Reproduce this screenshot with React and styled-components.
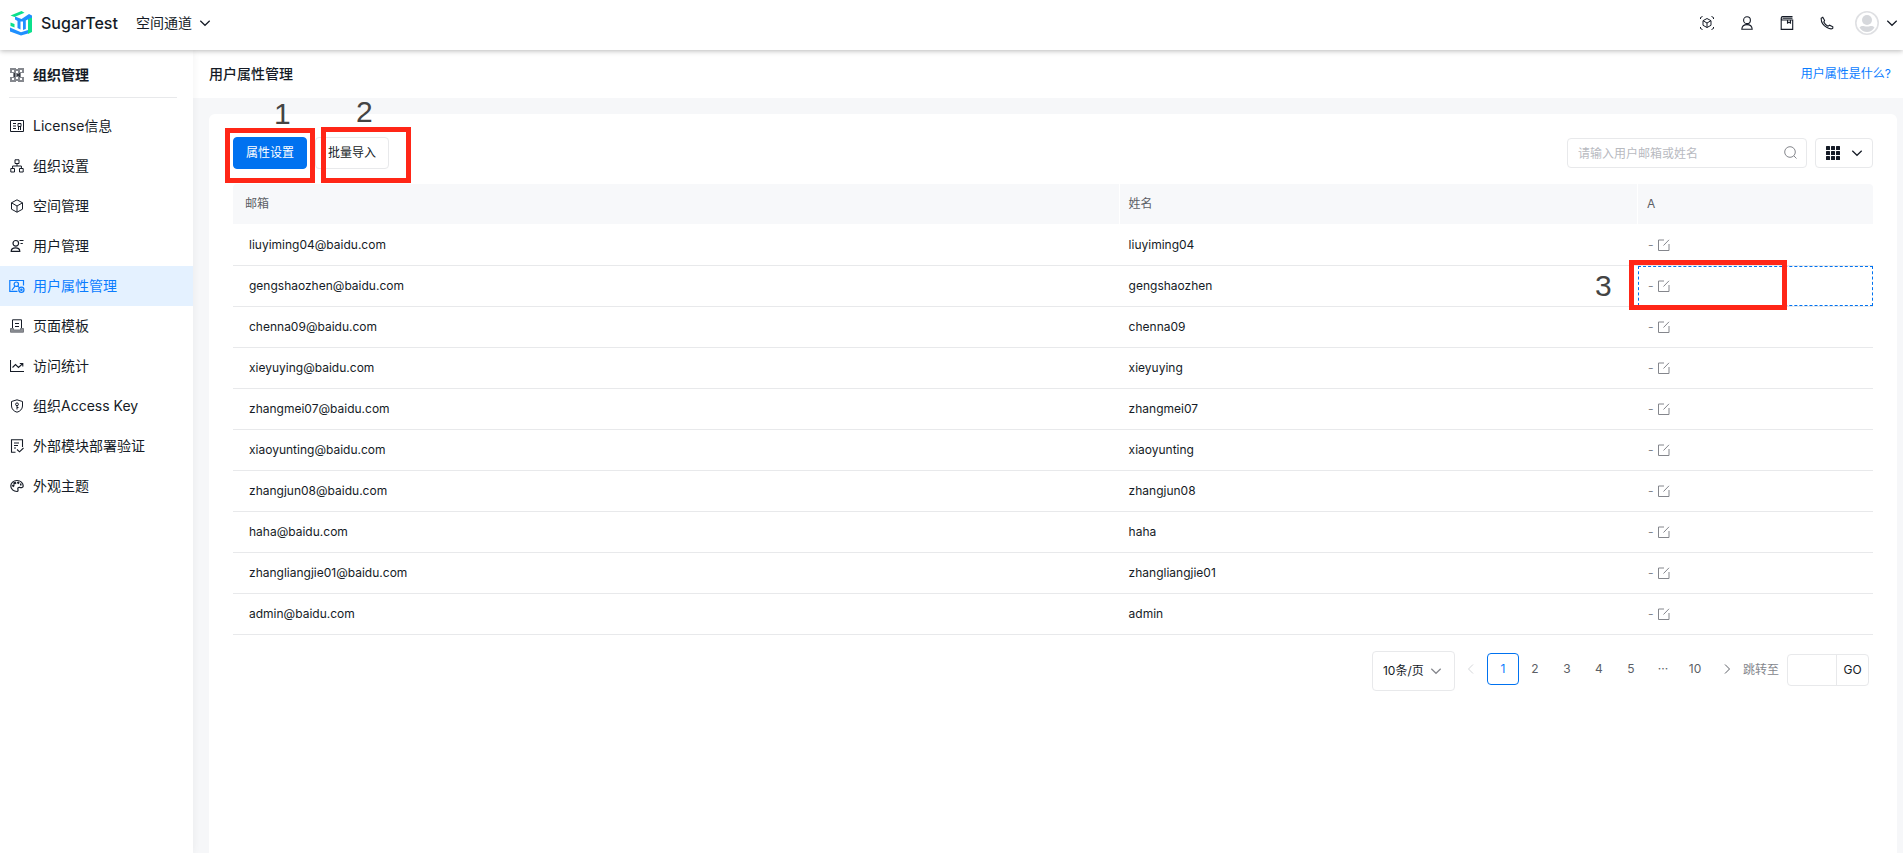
import React, { useState } from "react";
import styled, { createGlobalStyle } from "styled-components";

const GlobalStyle = createGlobalStyle`
  * {
    box-sizing: border-box;
  }

  body {
    margin: 0;
    background: #f6f7f9;
    color: #151b26;
    font-family: Inter, "Noto Sans CJK SC", sans-serif;
    font-size: 12px;
    line-height: 20px;
  }

  button,
  input,
  select {
    font: inherit;
    color: inherit;
  }

  svg {
    display: block;
    flex: none;
  }
`;

/* ---------- icons ---------- */

const Icon = ({ size = 14, box = 14, width = 1, children }) => (
  <svg
    width={size}
    height={size}
    viewBox={`0 0 ${box} ${box}`}
    fill="none"
    stroke="currentColor"
    strokeWidth={width}
    aria-hidden="true"
  >
    {children}
  </svg>
);

const Logo = () => (
  <svg width="24" height="26" viewBox="0 0 24 26" aria-hidden="true">
    <path d="M1.5 5.5 L12.5 1 L15.5 2.8 L5.5 7 Z" fill="#0be08c" />
    <path d="M19 9 L23 6.5 V22 L19 24 Z" fill="#0be08c" />
    <path d="M1.5 12.5 L5.5 14 V17.5 L1.5 16 Z" fill="#0be08c" />
    <path
      d="M6 6.5 L12.5 9 L20 4 L23 5.5 V7.5 L16.8 10.5 V19 L14 20 V11.5 L11.5 11.5 V19.5 L8.5 18 V11 L6 9.5 Z"
      fill="#2090ff"
    />
    <path d="M1 17.5 L12 22.3 L19 20 V23.5 L12 25.5 L1 21.5 Z" fill="#2090ff" />
  </svg>
);

const ChevronDown = () => (
  <Icon size={12} box={12} width={1.2}>
    <path d="M1.3 3.8 L6 8.3 L10.7 3.8" />
  </Icon>
);

const ChevronLeft = () => (
  <Icon size={12} box={12}>
    <path d="M8 1.5 L3.5 6 L8 10.5" />
  </Icon>
);

const ChevronRight = () => (
  <Icon size={12} box={12}>
    <path d="M4 1.5 L8.5 6 L4 10.5" />
  </Icon>
);

const OrgIcon = () => (
  <svg width="14" height="14" viewBox="0 0 14 14" aria-hidden="true">
    <path
      d="M0 0 H6 V1 H8 V0 H14 V5 H11 V9 H14 V14 H8 V13 H6 V14 H0 V9 H3 V5 H0 Z M2 2 V4 H4 V2 Z M10 2 V4 H12 V2 Z M2 10 V12 H4 V10 Z M10 10 V12 H12 V10 Z M6 3 V5 H8 V3 Z M6 9 V11 H8 V9 Z"
      fill="#85888e"
      fillRule="evenodd"
    />
    <path d="M4 5 H5 V9 H4 Z M9 5 H10 V9 H9 Z M7 6 H9 V8 H7 Z" fill="#33373f" />
  </svg>
);

const LicenseIcon = () => (
  <Icon>
    <path d="M0.5 1.5 H13.5 V12.5 H0.5 Z M3 4.5 H6 M3 7 H6 M3 9.5 H6" />
    <path d="M8 4.5 H11 V7.5 H8 Z M8.5 7.5 V11 M10.5 7.5 V11" />
  </Icon>
);

const TreeIcon = () => (
  <Icon>
    <path d="M5 0.8 H9 V4.5 H5 Z M0.8 9.5 H4.5 V13 H0.8 Z M9.5 9.5 H13.2 V13 H9.5 Z" />
    <path d="M7 4.5 V7 M2.6 9.5 V7 H11.4 V9.5" />
  </Icon>
);

const CubeIcon = () => (
  <Icon>
    <path d="M7 0.8 L12.5 3.8 V10.2 L7 13.2 L1.5 10.2 V3.8 Z M1.5 3.8 L7 7 L12.5 3.8 M7 7 V13.2" />
  </Icon>
);

const UserListIcon = () => (
  <Icon width={1.2}>
    <circle cx="5.8" cy="4.3" r="2.8" />
    <path d="M1.2 12.4 C1.2 9.6 3 8.8 5.5 8.8 S9.8 9.6 9.8 12.4 Z M9.5 1.5 H13.5 M10.5 4.5 H12.8" />
  </Icon>
);

const UserAttrIcon = () => (
  <Icon size={16} box={16} width={1.2}>
    <path d="M8.5 13.4 H0.8 V2.5 H14.5 V7.5 M3 12 L6 8.2 M9 8.2 L10 9.5" />
    <circle cx="7.3" cy="6.2" r="2.2" />
    <circle cx="12.4" cy="11.8" r="2.6" />
    <circle cx="12.4" cy="11.8" r="0.7" />
  </Icon>
);

const TemplateIcon = () => (
  <Icon>
    <path d="M2.5 9.5 V0.8 H11.5 V9.5 M5 4.5 H9 M5 7.5 H9" />
    <path d="M0.5 9.5 H3.5 V11 H10.5 V9.5 H13.5 V13.2 H0.5 Z" fill="#8c8f94" stroke="#777a80" />
  </Icon>
);

const StatIcon = () => (
  <Icon width={1.1}>
    <path d="M0.5 1 V12.5 H14 M2.5 8.5 L5.5 5.5 L8.5 8.5 L12.8 4.5 M9.8 4.5 H12.8 V7.5" />
  </Icon>
);

const ShieldIcon = () => (
  <Icon>
    <path d="M7 0.8 L12.5 2.5 V7 C12.5 10 10 12.5 7 13.2 C4 12.5 1.5 10 1.5 7 V2.5 Z" />
    <circle cx="7" cy="5.3" r="1.4" />
    <path d="M7 6.7 V10.5 M7 8.5 H8.5" />
  </Icon>
);

const VerifyIcon = () => (
  <Icon width={1.1}>
    <path d="M5.5 13.2 H1.5 V0.8 H12.5 V8 M4 4 H9 M4 6.5 H8 M4 9 H6 M7 10.5 L9.5 12.8 L13.5 9" />
  </Icon>
);

const PaletteIcon = () => (
  <Icon width={1.2}>
    <path d="M7 1.5 C3.5 1.5 0.8 4 0.8 7 S3.5 12.5 7 12.5 C8.5 12.5 8 10.5 7.8 9.8 C7.6 8.8 8.5 8.2 9.5 8.4 C11.5 9 13.2 8.5 13.2 7 C13.2 4 10.5 1.5 7 1.5 Z" />
    <path d="M2.5 7.5 L4 6 M3.5 4.8 L6 3.5 M7.5 4.5 L9 3 M10 5.5 H11.5" strokeWidth="2.2" />
  </Icon>
);

const ScanCubeIcon = () => (
  <Icon>
    <path d="M0.5 3 V1.5 L2.5 0.5 M11.5 0.5 L13.5 1.5 V3 M0.5 11 V12.5 L2.5 13.5 M11.5 13.5 L13.5 12.5 V11" />
    <path d="M7 2.5 L11 4.7 V9.3 L7 11.5 L3 9.3 V4.7 Z M3 4.7 L7 7 L11 4.7 M7 7 V11.5" />
  </Icon>
);

const PersonIcon = () => (
  <Icon width={1.1}>
    <circle cx="7" cy="4.2" r="3.4" />
    <path d="M1.8 13.2 C2 10 3.8 8.6 7 8.6 S12 10 12.2 13.2 Z" />
  </Icon>
);

const BookIcon = () => (
  <Icon width={1.1}>
    <path d="M12.5 0.6 H2.5 C0.9 0.6 0.9 4 2.5 4 H12.7 V13.4 H1.2 V2.2 M2.5 2.3 H12.5 M7.5 4.2 V7 L9 6.2 L10.5 7 V4.2" />
  </Icon>
);

const PhoneIcon = () => (
  <Icon width={1.1}>
    <path d="M1.2 2.2 L2.8 1.2 L4.6 4.4 L3.8 6 C4.6 7.8 6 9.4 8 10.2 L9.6 9.2 L12.8 10.8 V12.2 C11.8 13.2 9.6 13 7 11.6 C3.4 9.6 1 5.8 1.2 2.2 Z" />
  </Icon>
);

const Avatar = () => (
  <svg width="24" height="24" viewBox="0 0 24 24" aria-hidden="true">
    <circle cx="12" cy="12" r="11.2" fill="#fff" stroke="#dfe0e3" strokeWidth="1.6" />
    <circle cx="12" cy="9" r="5" fill="#d6d8dc" />
    <path d="M4.5 16.5 C7 14 8.5 15.5 12 15.5 S17 14 19.5 16.5 C17.5 19.7 15 21 12 21 S6.5 19.7 4.5 16.5 Z" fill="#d6d8dc" />
  </svg>
);

const SearchIcon = () => (
  <Icon>
    <circle cx="7" cy="6" r="5.3" />
    <path d="M10.8 9.8 L13.5 12.5" />
  </Icon>
);

const GridIcon = () => (
  <svg width="14" height="14" viewBox="0 0 14 14" fill="currentColor" aria-hidden="true">
    {[0, 5, 10].map((y) =>
      [0, 5, 10].map((x) => <rect key={x + "-" + y} x={x} y={y} width="4" height="4" rx="0.5" />)
    )}
  </svg>
);

const EditIcon = () => (
  <Icon size={12} box={12}>
    <path d="M6 1 H0.5 V11.5 H11 V5 M5.5 6.5 L11 0.8" />
  </Icon>
);

/* ---------- layout ---------- */

const Page = styled.div`
  display: flex;
  flex-direction: column;
  min-height: 100vh;
`;

const Header = styled.header`
  display: flex;
  align-items: center;
  justify-content: space-between;
  height: 50px;
  padding: 0 5px 5px 9px;
  background: #fff;
  box-shadow: 0 1px 5px rgba(0, 0, 0, 0.28);
  z-index: 2;
`;

const Brand = styled.div`
  display: flex;
  align-items: center;
  gap: 8px;
`;

const BrandName = styled.span`
  margin-right: 10px;
  font-size: 16px;
  font-weight: 500;
`;

const PlainButton = styled.button`
  display: flex;
  align-items: center;
  gap: ${(props) => props.$gap || 0}px;
  padding: 0;
  border: 0;
  background: none;
  font-size: 14px;
  cursor: pointer;
`;

const Tools = styled.div`
  display: flex;
  align-items: center;
  gap: 26px;
`;

const Account = styled(PlainButton)`
  margin-left: -5px;
`;

const Body = styled.div`
  display: flex;
  flex: 1;
`;

const Sidebar = styled.aside`
  flex: none;
  width: 193px;
  background: #fff;
  box-shadow: 0 0 8px rgba(0, 0, 0, 0.06);
  z-index: 1;
`;

const SidebarTitle = styled.div`
  display: flex;
  align-items: center;
  gap: 9px;
  height: 48px;
  margin: 0 16px 8px 9px;
  padding: 2px 0 0 1px;
  border-bottom: 1px solid #e8e9eb;
  font-size: 14px;
  font-weight: 600;
`;

const NavItem = styled.a`
  display: flex;
  align-items: center;
  gap: 8px;
  height: 40px;
  padding-left: 9px;
  background: ${(props) => (props.$active ? "#e4f1ff" : "transparent")};
  color: ${(props) => (props.$active ? "#0a7cff" : "#151b26")};
  font-size: 14px;
  text-decoration: none;
`;

const NavIcon = styled.span`
  display: flex;
  justify-content: center;
  width: 16px;
`;

const Main = styled.main`
  display: flex;
  flex: 1;
  flex-direction: column;
  min-width: 0;
`;

const TitleBar = styled.div`
  display: flex;
  align-items: center;
  justify-content: space-between;
  height: 48px;
  padding: 0 12px 1px 16px;
  background: #fff;
`;

const Title = styled.h1`
  margin: 0;
  font-size: 14px;
  font-weight: 500;
`;

const HelpLink = styled.a`
  color: #0a7cff;
  text-decoration: none;
`;

const Card = styled.section`
  flex: 1;
  margin: 16px 6px 0 16px;
  padding: 23px 24px;
  border-radius: 6px 6px 0 0;
  background: #fff;
`;

const Toolbar = styled.div`
  display: flex;
  align-items: center;
  justify-content: space-between;
  height: 32px;
  margin-bottom: 15px;
`;

const Group = styled.div`
  display: flex;
  gap: 8px;
`;

/* anchor of a numbered red frame */
const Marked = styled.div`
  position: relative;
`;

const Frame = styled.span`
  position: absolute;
  top: ${(props) => props.$top}px;
  left: ${(props) => props.$left}px;
  width: ${(props) => props.$width}px;
  height: ${(props) => props.$height}px;
  border: 5px solid #ff2617;
  pointer-events: none;
`;

const FrameNumber = styled.span`
  position: absolute;
  top: ${(props) => props.$top}px;
  left: ${(props) => props.$left}px;
  color: #444;
  font-family: "Liberation Sans", sans-serif;
  font-size: 30px;
  line-height: 30px;
  pointer-events: none;
`;

const Button = styled.button`
  width: 74px;
  height: 32px;
  padding: 0;
  border: 1px solid ${(props) => (props.$primary ? "#0072f0" : "#e8e9eb")};
  border-radius: 4px;
  background: ${(props) => (props.$primary ? "#0072f0" : "#fff")};
  color: ${(props) => (props.$primary ? "#fff" : "#151b26")};
  cursor: pointer;
`;

const SearchBox = styled.label`
  display: flex;
  align-items: center;
  width: 240px;
  height: 30px;
  padding: 0 9px 0 10px;
  border: 1px solid #e8e9eb;
  border-radius: 4px;
  color: #84868c;
`;

const SearchInput = styled.input`
  flex: 1;
  min-width: 0;
  padding: 1px 0 0;
  border: 0;
  outline: 0;
  background: none;

  &::placeholder {
    color: #b8babf;
  }
`;

const ColumnButton = styled(PlainButton)`
  justify-content: center;
  width: 58px;
  height: 30px;
  border: 1px solid #e8e9eb;
  border-radius: 4px;
`;

/* ---------- table ---------- */

const Table = styled.table`
  width: 100%;
  table-layout: fixed;
  border-collapse: separate;
  border-spacing: 0;
`;

const Th = styled.th`
  width: ${(props) => props.$width};
  height: 41px;
  padding: 0 9px;
  border-bottom: 1px solid #fff;
  background: #f7f8fa;
  color: #5c5f66;
  font-weight: 400;
  text-align: left;

  &:first-child {
    padding-left: 12px;
    border-top-left-radius: 4px;
  }

  &:last-child {
    border-top-right-radius: 4px;
  }

  & + & {
    border-left: 1px solid #fff;
  }
`;

const Td = styled.td`
  padding: 0;
  border-bottom: 1px solid #e8e9eb;
`;

const Cell = styled.div`
  position: relative;
  display: flex;
  align-items: center;
  gap: 4px;
  height: 40px;
  padding-left: ${(props) => props.$indent}px;
`;

const ValueCell = styled(Cell)`
  margin-left: 1px;
  border: 1px dashed ${(props) => (props.$active ? "#0072f0" : "transparent")};
  color: #84868c;
`;

const EditButton = styled(PlainButton)`
  color: #84868c;
`;

/* ---------- pagination ---------- */

const Pagination = styled.nav`
  display: flex;
  align-items: flex-start;
  justify-content: flex-end;
  padding: 16px 4px 0 0;
`;

const PageSize = styled.div`
  display: grid;
  align-items: center;
  width: 83px;
  height: 40px;
  border: 1px solid #e8e9eb;
  border-radius: 4px;

  & > * {
    grid-area: 1 / 1;
  }

  & > svg {
    justify-self: end;
    margin-right: 12px;
    color: #84868c;
    pointer-events: none;
  }
`;

const PageSelect = styled.select`
  height: 100%;
  padding: 0 0 0 10px;
  border: 0;
  outline: 0;
  background: none;
  appearance: none;
`;

const PageButton = styled.button`
  display: flex;
  align-items: center;
  justify-content: center;
  width: 32px;
  height: 32px;
  margin-top: 2px;
  padding: 0;
  border: 1px solid ${(props) => (props.$active ? "#0072f0" : "transparent")};
  border-radius: 4px;
  background: none;
  color: ${(props) => (props.$active ? "#0a7cff" : "#5c5f66")};

  &:disabled {
    color: #d4d6d9;
  }
`;

const JumpLabel = styled.label`
  margin: 9px 8px 0 0;
  color: #84868c;
`;

const Jump = styled.div`
  display: flex;
  height: 32px;
  margin-top: 3px;
  border: 1px solid #e8e9eb;
  border-radius: 4px;
`;

const JumpInput = styled.input`
  width: 48px;
  padding: 0 8px;
  border: 0;
  outline: 0;
  background: none;
`;

const JumpButton = styled.button`
  width: 32px;
  padding: 0;
  border: 0;
  border-left: 1px solid #e8e9eb;
  background: none;
`;

/* ---------- data ---------- */

const menu = [
  { label: "License信息", icon: LicenseIcon },
  { label: "组织设置", icon: TreeIcon },
  { label: "空间管理", icon: CubeIcon },
  { label: "用户管理", icon: UserListIcon },
  { label: "用户属性管理", icon: UserAttrIcon },
  { label: "页面模板", icon: TemplateIcon },
  { label: "访问统计", icon: StatIcon },
  { label: "组织Access Key", icon: ShieldIcon },
  { label: "外部模块部署验证", icon: VerifyIcon },
  { label: "外观主题", icon: PaletteIcon },
];

const tools = [
  { label: "大屏", icon: ScanCubeIcon },
  { label: "用户", icon: PersonIcon },
  { label: "文档", icon: BookIcon },
  { label: "电话", icon: PhoneIcon },
];

const users = [
  "liuyiming04",
  "gengshaozhen",
  "chenna09",
  "xieyuying",
  "zhangmei07",
  "xiaoyunting",
  "zhangjun08",
  "haha",
  "zhangliangjie01",
  "admin",
];

const App = () => {
  const [activeRow, setActiveRow] = useState(1);
  const [page, setPage] = useState("1");

  return (
    <Page>
      <GlobalStyle />
      <Header>
        <Brand>
          <Logo />
          <BrandName>SugarTest</BrandName>
          <PlainButton type="button" $gap={7}>
            空间通道
            <ChevronDown />
          </PlainButton>
        </Brand>
        <Tools>
          {tools.map(({ label, icon: ToolIcon }) => (
            <PlainButton key={label} type="button" aria-label={label}>
              <ToolIcon />
            </PlainButton>
          ))}
          <Account type="button" $gap={7} aria-label="账号">
            <Avatar />
            <ChevronDown />
          </Account>
        </Tools>
      </Header>

      <Body>
        <Sidebar>
          <SidebarTitle>
            <OrgIcon />
            组织管理
          </SidebarTitle>
          <nav>
            {menu.map(({ label, icon: MenuIcon }) => (
              <NavItem key={label} href="#" $active={label === "用户属性管理"}>
                <NavIcon>
                  <MenuIcon />
                </NavIcon>
                {label}
              </NavItem>
            ))}
          </nav>
        </Sidebar>

        <Main>
          <TitleBar>
            <Title>用户属性管理</Title>
            <HelpLink href="#">用户属性是什么?</HelpLink>
          </TitleBar>

          <Card>
            <Toolbar>
              <Group>
                <Marked>
                  <Button type="button" $primary>
                    属性设置
                  </Button>
                  <Frame $top={-9} $left={-8} $width={90} $height={55} />
                  <FrameNumber $top={-38} $left={41}>1</FrameNumber>
                </Marked>
                <Marked>
                  <Button type="button">批量导入</Button>
                  <Frame $top={-10} $left={6} $width={90} $height={56} />
                  <FrameNumber $top={-40} $left={41}>2</FrameNumber>
                </Marked>
              </Group>
              <Group>
                <SearchBox>
                  <SearchInput
                    type="text"
                    aria-label="搜索用户"
                    placeholder="请输入用户邮箱或姓名"
                  />
                  <SearchIcon />
                </SearchBox>
                <ColumnButton type="button" $gap={11} aria-label="显示列">
                  <GridIcon />
                  <ChevronDown />
                </ColumnButton>
              </Group>
            </Toolbar>

            <Table>
              <thead>
                <tr>
                  <Th $width="54%">邮箱</Th>
                  <Th>姓名</Th>
                  <Th $width="236px">A</Th>
                </tr>
              </thead>
              <tbody>
                {users.map((name, index) => (
                  <tr key={name}>
                    <Td>
                      <Cell $indent={16}>{name}@baidu.com</Cell>
                    </Td>
                    <Td>
                      <Cell $indent={10}>{name}</Cell>
                    </Td>
                    <Td>
                      <ValueCell $indent={9} $active={index === activeRow}>
                        -
                        <EditButton
                          type="button"
                          aria-label="编辑"
                          onClick={() => setActiveRow(index)}
                        >
                          <EditIcon />
                        </EditButton>
                        {index === 1 && (
                          <>
                            <Frame $top={-7} $left={-10} $width={158} $height={50} />
                            <FrameNumber $top={4} $left={-44}>3</FrameNumber>
                          </>
                        )}
                      </ValueCell>
                    </Td>
                  </tr>
                ))}
              </tbody>
            </Table>

            <Pagination>
              <PageSize>
                <PageSelect aria-label="每页条数" defaultValue="10">
                  <option value="10">10条/页</option>
                  <option value="20">20条/页</option>
                </PageSelect>
                <ChevronDown />
              </PageSize>
              <PageButton type="button" aria-label="上一页" disabled>
                <ChevronLeft />
              </PageButton>
              {["1", "2", "3", "4", "5", "···", "10"].map((item) => (
                <PageButton
                  key={item}
                  type="button"
                  $active={item === page}
                  onClick={() => setPage(item)}
                >
                  {item}
                </PageButton>
              ))}
              <PageButton type="button" aria-label="下一页">
                <ChevronRight />
              </PageButton>
              <JumpLabel htmlFor="jump">跳转至</JumpLabel>
              <Jump>
                <JumpInput id="jump" type="text" />
                <JumpButton type="button">GO</JumpButton>
              </Jump>
            </Pagination>
          </Card>
        </Main>
      </Body>
    </Page>
  );
};

export default App;
